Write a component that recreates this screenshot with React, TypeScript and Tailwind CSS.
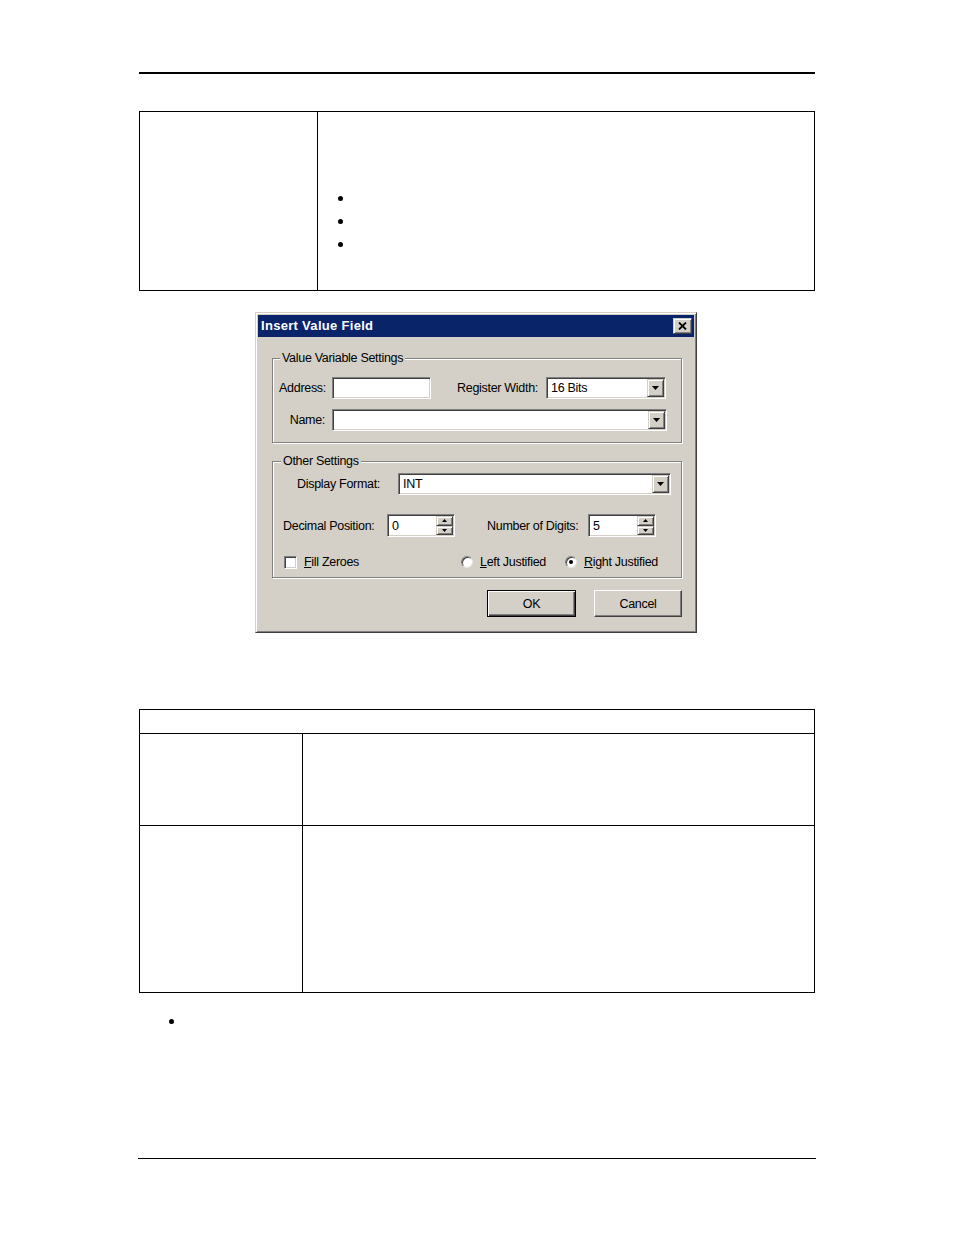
import React from "react";

const raised =
  "bg-[#d4d0c8] border border-t-[#d4d0c8] border-l-[#d4d0c8] border-r-[#404040] border-b-[#404040] shadow-[inset_1px_1px_0_#ffffff,inset_-1px_-1px_0_#808080]";
const sunken =
  "bg-white border border-t-[#808080] border-l-[#808080] border-r-white border-b-white shadow-[inset_1px_1px_0_#404040,inset_-1px_-1px_0_#d4d0c8]";

function Arrow({ up = false, small = false }: { up?: boolean; small?: boolean }) {
  const w = small ? 5 : 7;
  const h = small ? 3 : 4;
  return (
    <svg width={w} height={h} viewBox={`0 0 ${w} ${h}`} className="block">
      {up ? (
        <polygon points={`0,${h} ${w},${h} ${w / 2},0`} fill="#000" />
      ) : (
        <polygon points={`0,0 ${w},0 ${w / 2},${h}`} fill="#000" />
      )}
    </svg>
  );
}

function Combo({ width, value }: { width: string; value?: string }) {
  return (
    <div className={`${sunken} ${width} h-[22px] flex items-stretch p-[1px]`}>
      <div className="flex-1 flex items-center pl-[3px]">{value}</div>
      <div className={`${raised} w-[17px] flex items-center justify-center`}>
        <Arrow />
      </div>
    </div>
  );
}

function Spin({ value }: { value: string }) {
  return (
    <div className={`${sunken} w-[68px] h-[23px] flex items-stretch p-[1px]`}>
      <div className="flex-1 flex items-center pl-[3px]">{value}</div>
      <div className="w-[17px] flex flex-col">
        <div className={`${raised} flex-1 flex items-center justify-center`}>
          <Arrow up small />
        </div>
        <div className={`${raised} flex-1 flex items-center justify-center`}>
          <Arrow small />
        </div>
      </div>
    </div>
  );
}

function Radio({ checked }: { checked?: boolean }) {
  return (
    <div className="w-[12px] h-[12px] rounded-full bg-white border border-t-[#808080] border-l-[#808080] border-r-[#e8e6e0] border-b-[#e8e6e0] shadow-[inset_1px_1px_0_#404040] flex items-center justify-center">
      {checked && <div className="w-[4px] h-[4px] rounded-full bg-black" />}
    </div>
  );
}

function Dialog() {
  return (
    <div
      className={`w-[442px] ${raised} p-[2px] text-black text-[12.5px] leading-[14px] tracking-[-0.3px] font-['Liberation_Sans',Arial,sans-serif]`}
    >
      <div className="h-[22px] bg-[#0a246a] flex items-center justify-between pl-[3px] pr-[2px]">
        <span className="text-white font-bold text-[13px] tracking-[0.3px]">Insert Value Field</span>
        <div className={`${raised} w-[19px] h-[16px] flex items-center justify-center`}>
          <svg width="9" height="8" viewBox="0 0 9 8" className="block">
            <path d="M1 0.5 L8 7.5 M8 0.5 L1 7.5" stroke="#000" strokeWidth="1.8" />
          </svg>
        </div>
      </div>

      <div className="pl-[14px] pr-[12px] pb-[13px]">
        <fieldset className="mt-[14px] border border-[#808080] shadow-[1px_1px_0_#ffffff,inset_1px_1px_0_#ffffff] p-0 m-0">
          <legend className="ml-[7px] px-[2px] leading-[14px] bg-[#d4d0c8]">Value Variable Settings</legend>
          <div className="pt-[12px] pb-[11px]">
            <div className="flex items-center h-[22px]">
              <div className="w-[59px] text-right pr-[6px]">Address:</div>
              <div className={`${sunken} w-[99px] h-[22px]`} />
              <div className="w-[115px] text-right pr-[8px]">Register Width:</div>
              <Combo width="w-[120px]" value="16 Bits" />
            </div>
            <div className="flex items-center h-[22px] mt-[10px]">
              <div className="w-[59px] text-right pr-[7px]">Name:</div>
              <Combo width="w-[335px]" />
            </div>
          </div>
        </fieldset>

        <fieldset className="mt-[11px] border border-[#808080] shadow-[1px_1px_0_#ffffff,inset_1px_1px_0_#ffffff] p-0 m-0">
          <legend className="ml-[8px] px-[2px] leading-[14px] bg-[#d4d0c8]">Other Settings</legend>
          <div className="pt-[5px] pb-[8px]">
            <div className="flex items-center h-[22px]">
              <div className="w-[125px] pl-[24px]">Display Format:</div>
              <Combo width="w-[273px]" value="INT" />
            </div>
            <div className="flex items-center h-[23px] mt-[19px]">
              <div className="w-[114px] pl-[10px]">Decimal Position:</div>
              <Spin value="0" />
              <div className="w-[133px] pl-[32px]">Number of Digits:</div>
              <Spin value="5" />
            </div>
            <div className="flex items-center h-[14px] mt-[18px]">
              <div className="w-[188px] pl-[11px] flex items-center">
                <div className={`${sunken} w-[13px] h-[13px]`} />
                <span className="ml-[7px]">
                  <span className="underline">F</span>ill Zeroes
                </span>
              </div>
              <Radio />
              <span className="ml-[7px] w-[85px]">
                <span className="underline">L</span>eft Justified
              </span>
              <Radio checked />
              <span className="ml-[7px]">
                <span className="underline">R</span>ight Justified
              </span>
            </div>
          </div>
        </fieldset>

        <div className="flex justify-end mt-[12px]">
          <div className="w-[89px] h-[27px] bg-[#d4d0c8] border border-black shadow-[inset_1px_1px_0_#ffffff,inset_-1px_-1px_0_#404040,inset_-2px_-2px_0_#808080] flex items-center justify-center">
            OK
          </div>
          <div className="ml-[18px] w-[88px] h-[27px] bg-[#d4d0c8] border border-t-white border-l-white border-r-[#404040] border-b-[#404040] shadow-[inset_-1px_-1px_0_#808080] flex items-center justify-center">
            Cancel
          </div>
        </div>
      </div>
    </div>
  );
}

export default function App() {
  return (
    <div className="min-h-[1235px] w-[954px] bg-white">
      <div className="ml-[139px] w-[676px] pt-[72px]">
        <div className="h-[2px] bg-black" />

        <div className="mt-[37px] flex border border-black h-[180px]">
          <div className="w-[177px]" />
          <div className="flex-1 border-l border-black pt-[84px] pl-[20px] flex flex-col gap-[18px]">
            <div className="w-[5px] h-[5px] rounded-full bg-black" />
            <div className="w-[5px] h-[5px] rounded-full bg-black" />
            <div className="w-[5px] h-[5px] rounded-full bg-black" />
          </div>
        </div>

        <div className="mt-[21px] ml-[116px]">
          <Dialog />
        </div>

        <div className="mt-[76px] border border-black">
          <div className="h-[24px] border-b border-black" />
          <div className="flex h-[92px] border-b border-black">
            <div className="w-[162px]" />
            <div className="flex-1 border-l border-black" />
          </div>
          <div className="flex h-[166px]">
            <div className="w-[162px]" />
            <div className="flex-1 border-l border-black" />
          </div>
        </div>

        <div className="mt-[26px] ml-[30px] w-[5px] h-[5px] rounded-full bg-black" />

        <div className="mt-[134px] -ml-px w-[678px] h-px bg-black" />
      </div>
    </div>
  );
}
